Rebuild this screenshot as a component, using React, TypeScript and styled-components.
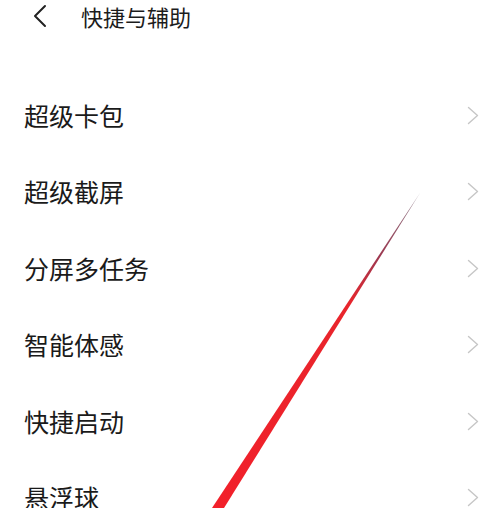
import React from 'react'
import styled, { createGlobalStyle } from 'styled-components'

const GlobalStyle = createGlobalStyle`
  html, body {
    margin: 0;
    padding: 0;
    background: #ffffff;
  }
  body {
    font-family: "Noto Sans CJK SC", "Noto Sans", sans-serif;
    color: #1c1c1c;
  }
`

const Screen = styled.main`
  position: relative;
  width: 500px;
  height: 508px;
  overflow: hidden;
  background: #ffffff;
`

const Header = styled.header`
  display: flex;
  align-items: center;

  height: 32px;
  padding-left: 31px;
`

const BackButton = styled.button`
  display: flex;
  align-items: center;
  justify-content: center;

  width: 18px;
  height: 24px;
  margin-right: 32px;
  padding: 0;
  border: none;
  background: none;
  color: #222;
`

const Title = styled.h1`
  margin: 0;
  font-size: 22px;
  font-weight: 400;
  line-height: 32px;
  color: #1c1c1c;
`

const List = styled.ul`
  margin: 0;
  padding: 45px 0 0 0;
  list-style: none;
`

const Row = styled.li`
  display: flex;
  align-items: center;
  justify-content: space-between;

  height: 76.5px;
  padding: 0 21px 0 24px;
`

const Label = styled.span`
  font-size: 25px;
  line-height: 1;
  color: #1a1a1a;
`

const Chevron = styled.svg`
  width: 12px;
  height: 19px;
  color: #c6c6c6;
`

const Annotation = styled.svg`
  position: absolute;
  left: 0;
  top: 0;
  width: 500px;
  height: 508px;
  pointer-events: none;
`

const items = ['超级卡包', '超级截屏', '分屏多任务', '智能体感', '快捷启动', '悬浮球']

const App = () => {
  return (
    <>
      <GlobalStyle />
      <Screen>
        <Header>
          <BackButton aria-label="返回">
            <svg width="16" height="24" viewBox="0 0 16 24">
              <path d="M13 2 L3 12 L13 22" fill="none" stroke="currentColor" strokeWidth="2" strokeLinecap="round" strokeLinejoin="round" />
            </svg>
          </BackButton>
          <Title>快捷与辅助</Title>
        </Header>
        <List>
          {items.map((item) => (
            <Row key={item}>
              <Label>{item}</Label>
              <Chevron viewBox="0 0 12 19">
                <path d="M1.5 1.5 L10.5 9.5 L1.5 17.5" fill="none" stroke="currentColor" strokeWidth="1.4" strokeLinecap="round" strokeLinejoin="round" />
              </Chevron>
            </Row>
          ))}
        </List>
        <Annotation viewBox="0 0 500 508">
          <defs>
            <linearGradient id="stroke" x1="420" y1="193" x2="218" y2="508" gradientUnits="userSpaceOnUse">
              <stop offset="0" stopColor="#8a7a88" />
              <stop offset="0.2" stopColor="#9c3850" />
              <stop offset="0.35" stopColor="#e8252c" />
              <stop offset="1" stopColor="#f2202a" />
            </linearGradient>
          </defs>
          <polygon points="420,193 224,508 212,508" fill="url(#stroke)" />
        </Annotation>
      </Screen>
    </>
  )
}

export default App
